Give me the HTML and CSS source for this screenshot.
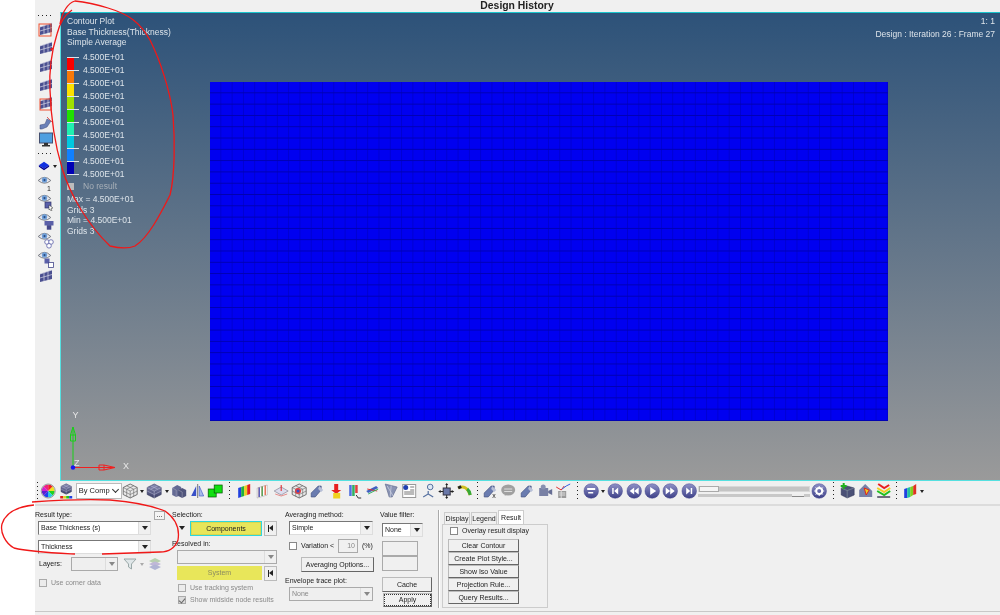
FILE: index.html
```html
<!DOCTYPE html>
<html lang="en">
<head>
<meta charset="utf-8">
<title>Design History</title>
<link rel="stylesheet" href="styles.css">
</head>
<body>
<svg class="defs" width="0" height="0" aria-hidden="true">
  <defs>
    <linearGradient id="gBtn" x1="0" y1="0" x2="0" y2="1"><stop offset="0" stop-color="#8f92c8"/><stop offset="1" stop-color="#3d4088"/></linearGradient>
    <linearGradient id="gCube" x1="0" y1="0" x2="0" y2="1"><stop offset="0" stop-color="#8c8fb8"/><stop offset="1" stop-color="#3a3d66"/></linearGradient>
    <symbol id="flag" viewBox="0 0 16 16"><path d="M2 6 L14 2 V11 L2 14Z" fill="#4a4f90"/><path d="M2 10 L14 6.500M6 5 V13M10 3.500 V12M2 6 L14 2" stroke="#d8d8e8" stroke-width=".7" fill="none"/></symbol>
    <symbol id="eye" viewBox="0 0 16 10"><path d="M1 5 Q8 -2 15 5 Q8 11 1 5Z" fill="#e8e8ee" stroke="#70747c"/><circle cx="8" cy="4.500" r="3" fill="#6f9fd8"/><circle cx="8" cy="4.500" r="1.200" fill="#2c4a80"/></symbol>
    <symbol id="cube" viewBox="0 0 16 16"><path d="M8 1 L15 4.500 V11.500 L8 15 L1 11.500 V4.500Z" fill="url(#gCube)" stroke="#33355a" stroke-width=".6"/><path d="M1 4.500 L8 8 L15 4.500M8 8 V15M4.500 2.800 L11.500 6.200M11.500 2.800 L4.500 6.200M1 8 L8 11.500 L15 8" stroke="#c0c2dc" stroke-width=".5" fill="none"/></symbol>
    <symbol id="wire" viewBox="0 0 16 16"><path d="M8 1 L15 4.500 V11.500 L8 15 L1 11.500 V4.500Z" fill="#e8e8e8" stroke="#555" stroke-width=".8"/><path d="M1 4.500 L8 8 L15 4.500M8 8 V15M4.500 2.800 L11.500 6.200M11.500 2.800 L4.500 6.200M1 8 L8 11.500 L15 8M4.500 6.300 V13.300M11.500 6.300 V13.300" stroke="#666" stroke-width=".6" fill="none"/></symbol>
    <symbol id="rb" viewBox="0 0 16 16"><circle cx="8" cy="8" r="7.300" fill="url(#gBtn)"/><circle cx="8" cy="8" r="7.300" fill="none" stroke="#4a4d90" stroke-width=".5"/></symbol>
    <symbol id="slope" viewBox="0 0 16 16"><path d="M2 14 V10 L9 3 L12 3 V7 L6 14Z" fill="#6a7cb0" stroke="#3c4a78" stroke-width=".6"/><path d="M10 3 L14 7 L12 9 L9 6Z" fill="#b8c0d8"/></symbol>
  </defs>
</svg>

<div class="app">
  <div class="title">Design History</div>

  <div class="work">
    <div class="side">
      <div class="dots-h"></div>
      <svg class="si"><use href="#flag"/><rect x="1" y="3" width="12" height="12" fill="none" stroke="#f05030"/></svg>
      <svg class="si"><use href="#flag"/></svg>
      <svg class="si"><use href="#flag"/></svg>
      <svg class="si"><use href="#flag"/></svg>
      <svg class="si"><use href="#flag"/><rect x="2" y="4" width="11" height="11" fill="none" stroke="#f05030"/></svg>
      <svg class="si" viewBox="0 0 16 16"><path d="M2 15 V11 L7 10 L9 5 L13 7 L9 13 L4 15Z" fill="#6a80b8" stroke="#3c4a78" stroke-width=".5"/><path d="M9 3 L14 8" stroke="#e06060"/></svg>
      <svg class="si" viewBox="0 0 16 16"><rect x="1.500" y="1" width="13" height="10" fill="#4f9fe0" stroke="#444f70"/><path d="M6 11 H10 V13 H12 V14.500 H4 V13 H6Z" fill="#333"/></svg>
      <div class="dots-h dots-gap"></div>
      <div class="si-row">
        <svg class="si-cube" viewBox="0 0 14 12"><path d="M7 1 L13 5 L7 9 L1 5Z" fill="#1030e0"/><path d="M1 5 V7 L7 11 L13 7 V5 L7 9Z" fill="#000090"/></svg>
        <span class="caret-s"></span>
      </div>
      <div class="si-eye"><svg class="eye"><use href="#eye"/></svg><span class="eye-n">1</span></div>
      <div class="si-eye"><svg class="eye"><use href="#eye"/></svg><svg class="eye-s" viewBox="0 0 10 10"><rect x="1" y="1" width="6" height="6" fill="#5a5fa8" stroke="#33366a" stroke-width=".7"/><path d="M5 4 L9 7 L7 7.500 L8 9.500 L6.800 9.800 L6 8 L5 9Z" fill="#fff" stroke="#333" stroke-width=".5"/></svg></div>
      <div class="si-eye"><svg class="eye"><use href="#eye"/></svg><svg class="eye-s" viewBox="0 0 10 10"><rect x=".500" y="1" width="4.500" height="4.500" fill="#5a5fa8"/><rect x="5" y="1" width="4.500" height="4.500" fill="#5a5fa8"/><rect x="2.800" y="5.200" width="4.500" height="4.500" fill="#44478a"/></svg></div>
      <div class="si-eye"><svg class="eye"><use href="#eye"/></svg><svg class="eye-s" viewBox="0 0 10 10"><circle cx="3" cy="3" r="2.300" fill="#fff" stroke="#5a5fa8" stroke-width=".8"/><circle cx="7" cy="3" r="2.300" fill="#fff" stroke="#5a5fa8" stroke-width=".8"/><circle cx="5" cy="6.800" r="2.300" fill="#fff" stroke="#5a5fa8" stroke-width=".8"/></svg></div>
      <div class="si-eye"><svg class="eye"><use href="#eye"/></svg><svg class="eye-s" viewBox="0 0 10 10"><rect x=".500" y=".500" width="5" height="5" fill="#5a5fa8"/><rect x="4.500" y="4.500" width="5" height="5" fill="#fff" stroke="#44478a" stroke-width=".8"/></svg></div>
      <svg class="si si-last"><use href="#flag"/></svg>
    </div>

    <div class="view">
      <div class="mesh"></div>
      <div class="info">
        <div>1: 1</div>
        <div class="info-2">Design : Iteration 26 : Frame 27</div>
      </div>
      <div class="legend">
        <div>Contour Plot</div>
        <div>Base Thickness(Thickness)</div>
        <div>Simple Average</div>
        <div class="scale">
          <div class="lg-row"><i class="sw c1"></i>4.500E+01</div>
          <div class="lg-row"><i class="sw c2"></i>4.500E+01</div>
          <div class="lg-row"><i class="sw c3"></i>4.500E+01</div>
          <div class="lg-row"><i class="sw c4"></i>4.500E+01</div>
          <div class="lg-row"><i class="sw c5"></i>4.500E+01</div>
          <div class="lg-row"><i class="sw c6"></i>4.500E+01</div>
          <div class="lg-row"><i class="sw c7"></i>4.500E+01</div>
          <div class="lg-row"><i class="sw c8"></i>4.500E+01</div>
          <div class="lg-row"><i class="sw c9"></i>4.500E+01</div>
          <div class="lg-row">4.500E+01</div>
        </div>
        <div class="noresult"><i class="nr-sw"></i>No result</div>
        <div class="stats">
          <div>Max = 4.500E+01</div>
          <div>Grids 3</div>
          <div>Min = 4.500E+01</div>
          <div>Grids 3</div>
        </div>
      </div>
      <div class="axes">
        <svg class="axes-svg" viewBox="0 0 70 80">
          <path d="M12 62 V22" stroke="#18d018"/>
          <path d="M12 22 L9.500 30 V36 H14.500 V30Z M9.500 30 H14.500" fill="none" stroke="#18d018"/>
          <path d="M12 62.500 H54" stroke="#f02020"/>
          <path d="M54 62.500 L43 60 H38 V65 H43Z M43 60 V65" fill="none" stroke="#f02020"/>
          <circle cx="12" cy="62.500" r="2.200" fill="#1818f0"/>
          <text x="11.500" y="13" class="ax">Y</text>
          <text x="13" y="61" class="ax">Z</text>
          <text x="62" y="63.500" class="ax">X</text>
        </svg>
      </div>
    </div>
  </div>

  <div class="tools">
    <i class="t-dots w4"></i>
    <svg class="ti" viewBox="0 0 16 16"><defs><clipPath id="wheel"><circle cx="8" cy="8" r="6.500"/></clipPath></defs><g clip-path="url(#wheel)"><path d="M8 8 L8 0 L16 0Z" fill="#f02020"/><path d="M8 8 L16 0 L16 8Z" fill="#f0e020"/><path d="M8 8 L16 8 L16 16Z" fill="#20d020"/><path d="M8 8 L16 16 L8 16Z" fill="#20d0e0"/><path d="M8 8 L8 16 L0 16Z" fill="#2040f0"/><path d="M8 8 L0 16 L0 8Z" fill="#6020d0"/><path d="M8 8 L0 8 L0 0Z" fill="#d020d0"/><path d="M8 8 L0 0 L8 0Z" fill="#f02080"/></g><circle cx="8" cy="8" r="7" fill="none" stroke="#999"/></svg>
    <svg class="ti" viewBox="0 0 16 16"><use href="#cube" width="12" height="12" x="2" y="0"/><rect x="2" y="13" width="3" height="2.500" fill="#e02020"/><rect x="5" y="13" width="3" height="2.500" fill="#e0d020"/><rect x="8" y="13" width="3" height="2.500" fill="#20c020"/><rect x="11" y="13" width="3" height="2.500" fill="#2040e0"/></svg>
    <div class="bycomp">By Comp<span class="bc-v"></span></div>
    <svg class="ti"><use href="#wire"/></svg><span class="t-caret"></span>
    <svg class="ti"><use href="#cube"/></svg><span class="t-caret"></span>
    <svg class="ti" viewBox="0 0 16 16"><path d="M1 5 L6 2 L10 4 V12 L5 14 L1 12Z" fill="#646a94"/><path d="M7 7 L11 5 L15 7 V13 L11 15 L7 13Z" fill="#50557c"/><path d="M1 5 L5 7 V14M7 7 L11 9 V15" stroke="#aab" stroke-width=".5" fill="none"/></svg>
    <svg class="ti" viewBox="0 0 16 16"><path d="M7 3 V13 H2Z" fill="#3850c8"/><path d="M10 3 V13 H14.500Z" fill="#a8b8e8" stroke="#3850c8" stroke-width=".6"/><path d="M8.500 1 V15" stroke="#777"/></svg>
    <svg class="ti" viewBox="0 0 16 16"><rect x="1" y="6" width="8" height="8" fill="#10e010" stroke="#085008" stroke-width=".7"/><rect x="7" y="2" width="8" height="8" fill="#10e010" stroke="#085008" stroke-width=".7"/></svg>
    <i class="t-dots w10"></i>
    <svg class="ti" viewBox="0 0 16 16"><path d="M2 5 L5 4 V14 L2 15Z" fill="#2040e0"/><path d="M5 4 L8 3 V13 L5 14Z" fill="#20b040"/><path d="M8 3 L11 2 V12 L8 13Z" fill="#e8d020"/><path d="M11 2 L14 1 V11 L11 12Z" fill="#e02020"/></svg>
    <svg class="ti" viewBox="0 0 16 16"><path d="M3 5 L13 2 V12 L3 15Z" fill="#fff" stroke="#999" stroke-width=".5"/><path d="M5 4.500 V14M8 3.500 V13M11 2.500 V12" stroke-width="1.300" fill="none" stroke="#e06040"/><path d="M8 3.500 V13" stroke="#40b060" stroke-width="1.300"/><path d="M5 4.500 V14" stroke="#4060d0" stroke-width="1.300"/></svg>
    <svg class="ti" viewBox="0 0 16 16"><path d="M1 8 L8 4 L15 8 L8 12Z" fill="#dde" stroke="#778" stroke-width=".6"/><path d="M8 2 V8" stroke="#e02020"/><path d="M2 11 L8 13 L14 11" stroke="#e06060" fill="none" stroke-width=".7"/></svg>
    <svg class="ti"><use href="#wire"/><circle cx="8" cy="8" r="3" fill="#e04040"/><circle cx="8" cy="8" r="1.500" fill="#3050d0"/></svg>
    <svg class="ti"><use href="#slope"/></svg>
    <svg class="ti" viewBox="0 0 16 16"><path d="M6 1 H10 V7 H13 L8 11 L3 7 H6Z" fill="#e82020"/><rect x="5" y="10" width="7" height="5.500" fill="#f0d020"/></svg>
    <svg class="ti" viewBox="0 0 16 16"><rect x="3" y="2" width="2.500" height="11" fill="#5070e0"/><rect x="6" y="2" width="2.500" height="11" fill="#30b060"/><rect x="9" y="2" width="2.500" height="8" fill="#e04040"/><path d="M10 12 L12 15 L15 15" stroke="#333" fill="none"/></svg>
    <svg class="ti" viewBox="0 0 16 16"><path d="M2 8 L12 3 L14 5 L4 10Z" fill="#4060c0"/><path d="M3 6 L13 8" stroke="#e03030"/><path d="M4 11 L14 6" stroke="#30b060"/></svg>
    <svg class="ti" viewBox="0 0 16 16"><path d="M2 1 L14 4 L9 14 L6 14Z" fill="#8a94b4" stroke="#5a6488" stroke-width=".6"/><path d="M4 3 L10 13M8 2.500 L7 14" stroke="#d0d4e4" stroke-width=".7"/></svg>
    <svg class="ti" viewBox="0 0 16 16"><rect x="1.500" y="1.500" width="13" height="13" fill="#fff" stroke="#999"/><circle cx="4.500" cy="4.500" r="2.500" fill="#2040b0"/><path d="M9 4 H13M9 7 H13M3 9 H13M3 11 H13" stroke="#777"/></svg>
    <svg class="ti" viewBox="0 0 16 16"><circle cx="10" cy="4" r="2.800" fill="#dde8f4" stroke="#5570a0"/><path d="M8 8 V11 L3 14M8 11 L13 14" stroke="#5570a0" stroke-width="1.200" fill="none"/></svg>
    <svg class="ti" viewBox="0 0 16 16"><rect x="5" y="5" width="7" height="7" fill="#6a78a8" stroke="#334"/><path d="M2 8.500 H5M12 8.500 H15M8.500 1 V5M8.500 12 V15" stroke="#222"/><path d="M0 8.500 L2.500 7 V10ZM16 8.500 L13.500 7 V10ZM8.500 0 L7 2 H10ZM8.500 16 L7 14 H10Z" fill="#222"/></svg>
    <svg class="ti" viewBox="0 0 16 16"><path d="M2 5 Q10 1 14 12" fill="none" stroke="#d0c020" stroke-width="3"/><path d="M11 6 Q13.500 8 14 12" fill="none" stroke="#38a838" stroke-width="3"/><path d="M2 5 L5 3.500" stroke="#222" stroke-width="3"/></svg>
    <i class="t-dots w7"></i>
    <svg class="ti" viewBox="0 0 16 16"><use href="#slope"/><text x="10" y="15" class="tx">x</text></svg>
    <svg class="ti" viewBox="0 0 16 16"><ellipse cx="8" cy="7" rx="7" ry="5.500" fill="#a0a0a0"/><path d="M4 13 L6 11 H8Z" fill="#a0a0a0"/><path d="M4 6 H12M4 8.500 H12" stroke="#ddd"/></svg>
    <svg class="ti"><use href="#slope"/></svg>
    <svg class="ti" viewBox="0 0 16 16"><rect x="2" y="5" width="9" height="8" fill="#7880a4"/><path d="M11 8 L15 6 V12 L11 10Z" fill="#666e94"/><circle cx="6" cy="4" r="2.500" fill="#8890b0"/></svg>
    <svg class="ti" viewBox="0 0 16 16"><rect x="3" y="8" width="8" height="7" fill="#9a9a9a"/><path d="M4 10 H10M4 12 H10M6 8 V15" stroke="#ddd"/><path d="M1 4 L6 7 L9 3" stroke="#e03030" fill="none"/><path d="M7 6 L11 3 L15 1" stroke="#3060e0" fill="none"/></svg>
    <i class="t-dots w9"></i>
    <svg class="ti" viewBox="0 0 16 16"><use href="#rb"/><path d="M4 5 H12 V7 H4ZM5 9 H10 V10.500 H5Z" fill="#fff"/></svg><span class="t-caret"></span>
    <svg class="ti" viewBox="0 0 16 16"><use href="#rb"/><path d="M5 5 H6.500 V11 H5ZM11 4.500 V11.500 L7 8Z" fill="#fff"/></svg>
    <svg class="ti" viewBox="0 0 16 16"><use href="#rb"/><path d="M8 4.500 V11.500 L3.500 8ZM12.500 4.500 V11.500 L8 8Z" fill="#fff"/></svg>
    <svg class="ti" viewBox="0 0 16 16"><use href="#rb"/><path d="M6 4 V12 L12 8Z" fill="#fff"/></svg>
    <svg class="ti" viewBox="0 0 16 16"><use href="#rb"/><path d="M3.500 4.500 V11.500 L8 8ZM8 4.500 V11.500 L12.500 8Z" fill="#fff"/></svg>
    <svg class="ti" viewBox="0 0 16 16"><use href="#rb"/><path d="M11 5 H9.500 V11 H11ZM5 4.500 V11.500 L9 8Z" fill="#fff"/></svg>
    <div class="slider">
      <div class="slider-a"><span class="knob"></span></div>
      <div class="slider-b"><span class="knob-b"></span></div>
    </div>
    <svg class="ti" viewBox="0 0 16 16"><use href="#rb"/><circle cx="8" cy="8" r="3" fill="none" stroke="#fff" stroke-width="2"/><path d="M8 3 V13M3 8 H13M4.500 4.500 L11.500 11.500M11.500 4.500 L4.500 11.500" stroke="#fff" stroke-width="1" stroke-dasharray="1.800 6.400"/></svg>
    <i class="t-dots w9"></i>
    <svg class="ti" viewBox="0 0 16 16"><path d="M8 3 L15 5 V12 L8 15 L2 12 V5Z" fill="#4a5076" stroke="#2a2f50" stroke-width=".5"/><path d="M2 5 L8 7.500 L15 5M8 7.500 V15" stroke="#9aa" stroke-width=".5" fill="none"/><path d="M4.500 0 V6M1.500 3 H7.500" stroke="#20b020" stroke-width="2"/></svg>
    <svg class="ti" viewBox="0 0 16 16"><path d="M8 1 L15 8 L15 14 H2 V7Z" fill="#7880a8"/><path d="M7 5 L12 7 L9 12Z" fill="#e8d020" stroke="#e02020"/></svg>
    <svg class="ti" viewBox="0 0 16 16"><path d="M3 1 L9 5 L14 2" stroke="#e82020" stroke-width="2" fill="none"/><path d="M2 5 L9 9 L15 5" stroke="#f0d020" stroke-width="2" fill="none"/><path d="M2 8 L9 12 L15 8" stroke="#20c020" stroke-width="2" fill="none"/><path d="M2 14 H15" stroke="#445" stroke-width="1.500"/></svg>
    <i class="t-dots w8"></i>
    <svg class="ti" viewBox="0 0 16 16"><path d="M2 6 L5 5 V15 L2 15Z" fill="#2040e0"/><path d="M5 5 L8 4 V14 L5 15Z" fill="#20c0a0"/><path d="M8 4 L11 3 V12 L8 14Z" fill="#80d020"/><path d="M11 3 L14 1 V11 L11 12Z" fill="#e03020"/></svg><span class="t-caret"></span>
  </div>

  <div class="panel">
    <div class="col col-result">
      <div class="lbl-row"><span class="lbl">Result type:</span><span class="more">...</span></div>
      <div class="sel sel-result">Base Thickness (s)<span class="arr"></span></div>
      <div class="sel sel-result sel-second">Thickness<span class="arr"></span></div>
      <div class="layers">
        <span class="lbl lbl-layers">Layers:</span>
        <div class="sel sel-off sel-layers"><span class="arr"></span></div>
        <svg class="funnel" viewBox="0 0 14 12"><path d="M1 1 H13 L8.500 6 V11 L5.500 9 V6Z" fill="#dfe6e8" stroke="#9aa8a8"/></svg>
        <span class="caret-g"></span>
        <svg class="stack" viewBox="0 0 14 14"><path d="M7 1 L13 4 L7 7 L1 4Z" fill="#b8d0b0"/><path d="M1 7 L7 10 L13 7 L7 4.500Z" fill="#c0b8d8"/><path d="M1 10 L7 13 L13 10 L7 7.500Z" fill="#b0b4d4"/></svg>
      </div>
      <label class="chk-row chk-corner off"><i class="chk"></i>Use corner data</label>
    </div>

    <div class="col col-sel">
      <div class="lbl">Selection:</div>
      <div class="sel-line">
        <span class="mini-drop"></span>
        <div class="yellow yellow-on">Components</div>
        <div class="first-btn"><i class="fb-bar"></i><i class="fb-tri"></i></div>
      </div>
      <div class="lbl lbl-res">Resolved in:</div>
      <div class="sel sel-off sel-res"><span class="arr"></span></div>
      <div class="sel-line sel-line-sys">
        <div class="yellow yellow-off">System</div>
        <div class="first-btn"><i class="fb-bar"></i><i class="fb-tri"></i></div>
      </div>
      <label class="chk-row chk-track off"><i class="chk"></i>Use tracking system</label>
      <label class="chk-row chk-mid off"><i class="chk chk-on"></i>Show midside node results</label>
    </div>

    <div class="col col-avg">
      <div class="lbl">Averaging method:</div>
      <div class="sel sel-avg">Simple<span class="arr"></span></div>
      <div class="var-row">
        <i class="chk chk-white"></i><span class="var-t">Variation &lt;</span>
        <span class="num">10</span><span class="pct">(%)</span>
      </div>
      <div class="btn btn-avg">Averaging Options...</div>
      <div class="lbl lbl-env">Envelope trace plot:</div>
      <div class="sel sel-off sel-avg">None<span class="arr"></span></div>
    </div>

    <div class="col col-val">
      <div class="lbl">Value filter:</div>
      <div class="sel sel-val">None<span class="arr"></span></div>
      <div class="box box-1"></div>
      <div class="box"></div>
      <div class="btn btn-cache">Cache</div>
      <div class="btn btn-apply">Apply</div>
    </div>

    <div class="vsep"></div>

    <div class="col col-tabs">
      <div class="tabs">
        <span class="tab">Display</span><span class="tab">Legend</span><span class="tab tab-on">Result</span>
      </div>
      <div class="tab-body">
        <label class="chk-row"><i class="chk chk-white"></i>Overlay result display</label>
        <div class="btn btn-tab">Clear Contour</div>
        <div class="btn btn-tab">Create Plot Style...</div>
        <div class="btn btn-tab">Show Iso Value</div>
        <div class="btn btn-tab">Projection Rule...</div>
        <div class="btn btn-tab">Query Results...</div>
      </div>
    </div>
  </div>
</div>

<svg class="marks" viewBox="0 0 1000 615" aria-hidden="true">
  <path d="M72 10 C66 14 60 22 57 34 C52 50 49 70 50 90 C51 120 55 145 62 168 C70 195 88 225 110 246 C118 248 128 249 135 246 C148 238 160 215 170 195 C175 175 175 140 173 115 C170 90 160 60 150 40 C140 22 128 14 108 8 C95 4 85 2 75 1 C68 3 62 12 60 24" fill="none" stroke="#f01818" stroke-width="1.300"/>
  <path d="M50 49 L54 47 L52 51Z" fill="#f01818"/>
  <path d="M32 502 C60 500 90 499 110 500 C135 502 155 507 165 511 C175 518 180 528 178 540 C175 548 168 552 160 552 L102 554 M75 554 C55 553 30 552 14 548 C5 543 0 532 2 524 C5 514 15 507 34 505" fill="none" stroke="#f01818" stroke-width="1.300"/>
</svg>
</body>
</html>
```
FILE: styles.css
```css
* { box-sizing: border-box; }
html, body { margin: 0; padding: 0; width: 1000px; height: 615px; overflow: hidden; background: #fff; }
body { font-family: "Liberation Sans", Arial, sans-serif; font-size: 7px; color: #222; position: relative; }
.defs { position: absolute; }
i { display: block; font-style: normal; }

.app { margin-left: 35px; width: 965px; height: 615px; background: #f0f0f0; display: flex; flex-direction: column; filter: blur(.3px); }

.title { height: 12px; line-height: 11px; font-size: 10.400px; font-weight: 700; text-align: center; color: #222; padding-right: 1px; flex: none; }

.work { height: 469px; display: flex; flex: none; }

.side { width: 25px; flex: none; display: flex; flex-direction: column; align-items: center; padding-right: 3px; padding-top: 3px; }
.dots-h { width: 16px; height: 1px; margin-bottom: 5px; background: repeating-linear-gradient(90deg, #222 0 1px, transparent 1px 4px); flex: none; }
.dots-gap { margin-top: 2px; margin-bottom: 6px; }
.si { width: 16px; height: 16px; margin-bottom: 2.500px; flex: none; }
.si-row { display: flex; align-items: center; height: 13px; width: 22px; margin-bottom: 3px; padding-left: 3px; gap: 3px; }
.si-cube { width: 13px; height: 12px; }
.caret-s { width: 0; height: 0; border: 2px solid transparent; border-top: 3px solid #222; margin-top: 2px; }
.si-eye { width: 22px; height: 18.800px; position: relative; flex: none; }
.eye { position: absolute; left: 2px; top: 0; width: 15px; height: 9px; }
.eye-n { position: absolute; left: 12px; top: 9px; font-size: 7px; line-height: 7px; }
.eye-s { position: absolute; left: 9px; top: 7px; width: 10px; height: 10px; }
.si-last { margin-top: -1px; }

.view { flex: 1; position: relative; border-left: 1px solid #55e0e0; border-top: 1px solid #19c4cc; border-bottom: 1px solid #55e0e0; background: linear-gradient(180deg, #2d5279 0%, #9a9a9a 100%); color: #dde4ea; font-size: 8.500px; line-height: 10.500px; overflow: hidden; }

.mesh { position: absolute; left: 149px; top: 69px; width: 678px; height: 339px; background-color: #0000f0; background-image: linear-gradient(180deg, transparent 10.300px, #0000b0 10.300px, #0000b0 11.300px), linear-gradient(90deg, transparent 10.300px, #0000d0 10.300px, #0000d0 11.300px); background-size: 100% 11.300px, 11.300px 100%; }

.info { position: absolute; right: 5px; top: 3px; text-align: right; }
.info-2 { margin-top: 2.500px; }

.legend { position: relative; padding: 3px 0 0 6px; width: 140px; }
.scale { margin-top: 3px; }
.lg-row { position: relative; height: 13px; line-height: 13px; padding-left: 16px; }
.lg-row::before { content: ""; position: absolute; left: 0; top: 6px; width: 12px; height: 1px; background: #dde4ea; z-index: 1; }
.sw { position: absolute; left: 0; top: 6.500px; width: 6.500px; height: 13px; }
.c1 { background: #fa0000; }
.c2 { background: #f87808; }
.c3 { background: #fde000; }
.c4 { background: #a0e000; }
.c5 { background: #20e000; }
.c6 { background: #20f0b0; }
.c7 { background: #00c8e0; }
.c8 { background: #1080ff; }
.c9 { background: #0000b4; }
.noresult { display: flex; align-items: center; height: 10.500px; margin-top: .500px; color: #a8b0b8; }
.nr-sw { width: 7px; height: 7px; background: #bcbcbc; margin-right: 9px; }
.stats { margin-top: 2.500px; }

.axes { position: absolute; left: 0; top: 392px; width: 70px; height: 80px; }
.axes-svg { width: 70px; height: 80px; display: block; }
.ax { font-family: "Liberation Sans", Arial, sans-serif; font-size: 9px; fill: #e8e8e8; }
.tx { font-family: "Liberation Sans", Arial, sans-serif; font-size: 7px; fill: #222; }

.tools { height: 25px; flex: none; display: flex; align-items: center; border-bottom: 2px solid #dcdcdc; padding-bottom: 3px; }
.ti { width: 18.400px; height: 16px; flex: none; }
.t-dots { height: 18px; flex: none; background-image: repeating-linear-gradient(180deg, #222 0 1px, transparent 1px 4px); background-size: 1px 100%; background-repeat: no-repeat; background-position: center; }
.w4 { width: 4px; }
.w7 { width: 7px; }
.w8 { width: 8px; }
.w9 { width: 9px; }
.w10 { width: 10px; }
.t-caret { width: 6px; height: 3px; flex: none; position: relative; }
.t-caret::before { content: ""; position: absolute; left: 1px; top: 0; border: 2px solid transparent; border-top: 3px solid #222; border-bottom: 0; }
.bycomp { width: 46px; height: 16px; line-height: 14px; background: #fff; border: 1px solid #bbb; padding-left: 2px; flex: none; font-size: 7.500px; color: #222; position: relative; margin-right: -1px; }
.bc-v { position: absolute; right: 3px; top: 3px; width: 5px; height: 5px; border-right: 1px solid #333; border-bottom: 1px solid #333; transform: rotate(45deg); }
.slider { width: 112px; flex: none; display: flex; flex-direction: column; gap: 2px; }
.slider-a { height: 6px; background: #c4c4c4; border: 1px solid #d8d8d8; position: relative; }
.knob { display: block; width: 20px; height: 6px; margin-top: -1px; background: linear-gradient(90deg, #f4f4f4 0 48%, #999 48% 52%, #f4f4f4 52%); border: 1px solid #aaa; }
.slider-b { height: 3px; background: #c8c8c8; position: relative; display: flex; justify-content: flex-end; padding-right: 6px; }
.knob-b { width: 12px; height: 3px; background: #eee; border-bottom: 1px solid #888; }

.panel { height: 106px; flex: none; display: flex; border-bottom: 1px solid #c8c8c8; color: #222; line-height: 10px; padding-top: 4px; }
.col { display: flex; flex-direction: column; flex: none; }
.lbl { line-height: 10px; }

.col-result { width: 136px; }
.lbl-row { display: flex; justify-content: space-between; height: 11px; padding-right: 6px; }
.more { width: 11px; height: 9px; border: 1px solid #aaa; background: #f4f4f4; line-height: 5px; text-align: center; font-size: 8px; margin-top: 1px; }
.sel { position: relative; height: 14px; line-height: 12px; background: #fff; border: 1px solid #777; border-right-color: #ddd; border-bottom-color: #ddd; padding-left: 2px; color: #222; flex: none; }
.sel-result { width: 113px; margin-left: 3px; }
.sel-second { margin-top: 5px; }
.arr { position: absolute; right: 0; top: 0; width: 12px; height: 100%; background: #f0f0f0; border-left: 1px solid #ddd; }
.arr::after { content: ""; position: absolute; left: 3px; top: 4px; border: 3px solid transparent; border-top: 4px solid #222; border-bottom: 0; }
.sel-off { background: #efefef; color: #888; border-color: #aaa; }
.sel-off .arr::after { border-top-color: #888; }
.layers { display: flex; align-items: center; margin-top: 3px; height: 14px; padding-left: 4px; }
.lbl-layers { width: 32px; }
.sel-layers { width: 47px; }
.funnel { width: 14px; height: 12px; margin-left: 5px; }
.caret-g { width: 0; height: 0; border: 2px solid transparent; border-top: 3px solid #aaa; margin: 2px 2px 0 3px; }
.stack { width: 14px; height: 14px; margin-left: 2px; }
.chk-row { display: flex; align-items: center; height: 10px; gap: 4px; white-space: nowrap; }
.chk { width: 8px; height: 8px; background: #ececec; border: 1px solid #aaa; flex: none; }
.chk-white { background: #fff; border-color: #888; }
.chk-on { position: relative; background: #dcdcdc; }
.chk-on::after { content: ""; position: absolute; left: 1px; top: 0; width: 3px; height: 5px; border-right: 1px solid #666; border-bottom: 1px solid #666; transform: rotate(40deg); }
.off { color: #8a8a8a; }
.chk-corner { margin: 7px 0 0 4px; }

.col-sel { width: 113px; margin-left: 1px; }
.sel-line { display: flex; align-items: center; height: 16px; margin-left: 4px; gap: 2px; position: relative; }
.mini-drop { width: 12px; height: 14px; position: relative; flex: none; }
.mini-drop::after { content: ""; position: absolute; left: 3px; top: 5px; border: 3px solid transparent; border-top: 4px solid #222; border-bottom: 0; }
.yellow { background: #e8e65a; text-align: center; flex: none; }
.yellow-on { width: 72px; height: 15px; line-height: 13px; border: 1px solid #2fd7dc; box-shadow: inset 0 0 0 1px #d8d650; color: #222; }
.yellow-off { width: 85px; height: 14px; line-height: 14px; color: #8c8c60; margin-left: 1px; }
.first-btn { width: 13px; height: 15px; background: #f0f0f0; border: 1px solid #bbb; display: flex; align-items: center; justify-content: center; flex: none; }
.fb-bar { width: 1px; height: 7px; background: #222; }
.fb-tri { width: 0; height: 0; border: 3px solid transparent; border-right: 4px solid #222; border-left: 0; }
.lbl-res { margin-top: 3px; }
.sel-res { width: 100px; margin: 1px 0 0 5px; }
.sel-line-sys { margin-top: 1px; }
.chk-track { margin: 2px 0 0 6px; }
.chk-mid { margin: 2px 0 0 6px; }

.col-avg { width: 95px; }
.sel-avg { width: 84px; margin: 1px 0 0 4px; }
.var-row { display: flex; align-items: center; height: 14px; margin: 4px 0 0 4px; }
.var-t { margin-left: 4px; width: 37px; white-space: nowrap; }
.num { width: 20px; height: 14px; line-height: 12px; border: 1px solid #aaa; text-align: right; padding-right: 2px; color: #888; flex: none; }
.pct { margin-left: 4px; }
.btn { background: #f0f0f0; border: 1px solid #bbb; border-right-color: #666; border-bottom-color: #666; text-align: center; flex: none; color: #222; white-space: nowrap; }
.btn-avg { width: 73px; height: 15px; line-height: 13px; margin: 4px 0 0 16px; }
.lbl-env { margin-top: 4px; }

.col-val { width: 58px; }
.sel-val { width: 41px; margin: 3px 0 0 2px; }
.box { width: 36px; height: 15px; border: 1px solid #aaa; margin-left: 2px; flex: none; }
.box-1 { margin-top: 4px; }
.btn-cache { width: 50px; height: 15px; line-height: 13px; margin: 6px 0 0 2px; }
.btn-apply { width: 49px; height: 14px; line-height: 12px; margin: 1px 0 0 3px; outline: 1px dotted #333; outline-offset: -2px; }

.vsep { width: 2px; height: 98px; border-left: 1px solid #aaa; border-right: 1px solid #fff; flex: none; }

.col-tabs { width: 106px; margin-left: 2px; }
.tabs { display: flex; height: 14px; align-items: flex-end; padding-left: 2px; gap: 1px; }
.tab { height: 12px; line-height: 11px; width: 26px; text-align: center; border: 1px solid #ccc; border-bottom: 0; background: #f0f0f0; }
.tab-on { height: 14px; line-height: 13px; background: #fff; }
.tab-body { width: 106px; height: 84px; border: 1px solid #ccc; padding: 1.500px 0 0 5px; }
.tab-body .chk-row { height: 9px; margin: 0 0 3px 2px; }
.btn-tab { width: 71px; height: 13px; line-height: 11px; }

.marks { position: absolute; left: 0; top: 0; width: 1000px; height: 615px; pointer-events: none; }
```
